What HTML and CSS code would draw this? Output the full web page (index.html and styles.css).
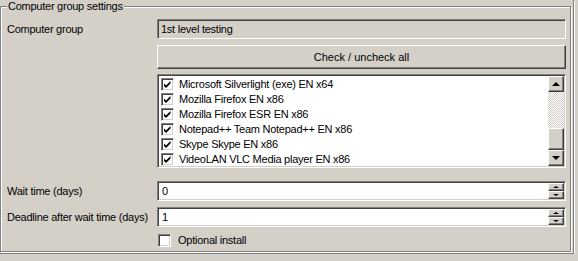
FILE: index.html
```html
<!DOCTYPE html>
<html lang="en">
<head>
    <meta charset="UTF-8">
    <title>Computer group settings</title>
    <link rel="stylesheet" href="styles.css">
</head>
<body>
    <div class="panel">
        <fieldset class="group">
            <legend>Computer group settings</legend>

            <div class="row">
                <label class="lbl">Computer group</label>
                <div class="field readonly">1st level testing</div>
            </div>

            <div class="row gap-btn">
                <span class="lbl"></span>
                <button class="btn">Check / uncheck all</button>
            </div>

            <div class="row gap-list">
                <span class="lbl"></span>
                <div class="list">
                    <ul class="items">
                        <li><span class="cb"><svg viewBox="0 0 9 9"><path d="M1 3.5l2 2 4.5-4.5v2.5l-4.5 4.5-2-2z"/></svg></span>Microsoft Silverlight (exe) EN x64</li>
                        <li><span class="cb"><svg viewBox="0 0 9 9"><path d="M1 3.5l2 2 4.5-4.5v2.5l-4.5 4.5-2-2z"/></svg></span>Mozilla Firefox EN x86</li>
                        <li><span class="cb"><svg viewBox="0 0 9 9"><path d="M1 3.5l2 2 4.5-4.5v2.5l-4.5 4.5-2-2z"/></svg></span>Mozilla Firefox ESR EN x86</li>
                        <li><span class="cb"><svg viewBox="0 0 9 9"><path d="M1 3.5l2 2 4.5-4.5v2.5l-4.5 4.5-2-2z"/></svg></span>Notepad++ Team Notepad++ EN x86</li>
                        <li><span class="cb"><svg viewBox="0 0 9 9"><path d="M1 3.5l2 2 4.5-4.5v2.5l-4.5 4.5-2-2z"/></svg></span>Skype Skype EN x86</li>
                        <li><span class="cb"><svg viewBox="0 0 9 9"><path d="M1 3.5l2 2 4.5-4.5v2.5l-4.5 4.5-2-2z"/></svg></span>VideoLAN VLC Media player EN x86</li>
                    </ul>
                    <div class="vscroll">
                        <div class="sbtn"><span class="arrow up"></span></div>
                        <div class="track"></div>
                        <div class="thumb"></div>
                        <div class="sbtn"><span class="arrow down"></span></div>
                    </div>
                </div>
            </div>

            <div class="row gap-wait">
                <label class="lbl">Wait time (days)</label>
                <div class="field num">
                    <span class="value">0</span>
                    <div class="spin">
                        <div class="sp"><span class="mini up"></span></div>
                        <div class="sp"><span class="mini down"></span></div>
                    </div>
                </div>
            </div>

            <div class="row gap-field">
                <label class="lbl">Deadline after wait time (days)</label>
                <div class="field num">
                    <span class="value">1</span>
                    <div class="spin">
                        <div class="sp"><span class="mini up"></span></div>
                        <div class="sp"><span class="mini down"></span></div>
                    </div>
                </div>
            </div>

            <div class="row gap-check">
                <span class="lbl"></span>
                <label class="option"><span class="cb big"></span>Optional install</label>
            </div>
        </fieldset>
    </div>
</body>
</html>
```

FILE: styles.css
```css
body {
    margin: 0;
    background-color: #d4d0c8;
    font-family: "Liberation Sans", Arial, sans-serif;
    font-size: 11px;
    line-height: 13px;
    letter-spacing: -0.25px;
    color: #000;
}
.panel {
    width: 573px;
    height: 253px;
    border-right: 1px solid #808080;
    border-bottom: 1px solid #808080;
    box-shadow: 1px 1px 0 #fff;
}
.group {
    box-sizing: border-box;
    width: 571px;
    min-width: 0;
    margin: 0;
    padding: 6px 4px 4px 6px;
    border: 1px solid #808080;
    box-shadow: inset 1px 1px 0 #fff, 1px 1px 0 #fff;
}
.group legend {
    padding: 0 1px;
    background-color: #d4d0c8;
    line-height: 13px;
}
.row {
    display: flex;
    align-items: center;
}
.lbl {
    width: 150px;
    flex: none;
}
.gap-btn { margin-top: 6px; }
.gap-list { margin-top: 5px; }
.gap-wait { margin-top: 13px; }
.gap-field { margin-top: 6px; }
.gap-check { margin-top: 7px; }

/* sunken 3d edge */
.field, .list, .cb {
    box-sizing: border-box;
    border-style: solid;
    border-width: 1px;
    border-color: #808080 #fff #fff #808080;
    box-shadow: inset 1px 1px 0 #404040, inset -1px -1px 0 #d4d0c8;
}
.field {
    width: 409px;
    height: 20px;
    padding: 0 3px;
    display: flex;
    align-items: center;
    background-color: #fff;
}
.field.readonly {
    background-color: #d4d0c8;
    padding-left: 3px;
}
.field.num {
    padding: 1px 1px 1px 4px;
}
.value {
    flex: 1;
}

/* raised 3d edge */
.btn, .sbtn, .thumb, .sp {
    box-sizing: border-box;
    background-color: #d4d0c8;
    border-style: solid;
    border-width: 1px;
    border-color: #fff #404040 #404040 #fff;
    box-shadow: inset -1px -1px 0 #808080;
}
.btn {
    width: 409px;
    height: 24px;
    padding: 0;
    font: inherit;
    letter-spacing: 0;
    color: #000;
}
.list {
    width: 409px;
    height: 94px;
    padding: 1px;
    display: flex;
    background-color: #fff;
}
.items {
    flex: 1;
    list-style: none;
    margin: 0;
    padding: 1px 0 0 2px;
}
.items li {
    height: 15px;
    display: flex;
    align-items: center;
}
.cb {
    width: 13px;
    height: 13px;
    flex: none;
    margin-right: 5px;
    background-color: #fff;
    display: flex;
    align-items: center;
    justify-content: center;
}
.cb svg {
    width: 9px;
    height: 9px;
    fill: #000;
}
.vscroll {
    width: 16px;
    display: flex;
    flex-direction: column;
}
.sbtn {
    height: 16px;
    display: flex;
    align-items: center;
    justify-content: center;
}
.track {
    height: 36px;
    background: repeating-conic-gradient(#fff 0 25%, #d4d0c8 0 50%) 0 0 / 2px 2px;
}
.thumb {
    height: 22px;
}
.arrow {
    width: 0;
    height: 0;
    border-left: 4px solid transparent;
    border-right: 4px solid transparent;
}
.arrow.up { border-bottom: 4px solid #000; }
.arrow.down { border-top: 4px solid #000; }
.spin {
    width: 16px;
    display: flex;
    flex-direction: column;
}
.sp {
    height: 8px;
    display: flex;
    align-items: center;
    justify-content: center;
}
.mini {
    width: 0;
    height: 0;
    border-left: 3px solid transparent;
    border-right: 3px solid transparent;
}
.mini.up { border-bottom: 2px solid #000; }
.mini.down { border-top: 2px solid #000; }
.option {
    display: flex;
    align-items: center;
    margin-left: 1px;
}
.cb.big {
    margin-right: 7px;
}
```
